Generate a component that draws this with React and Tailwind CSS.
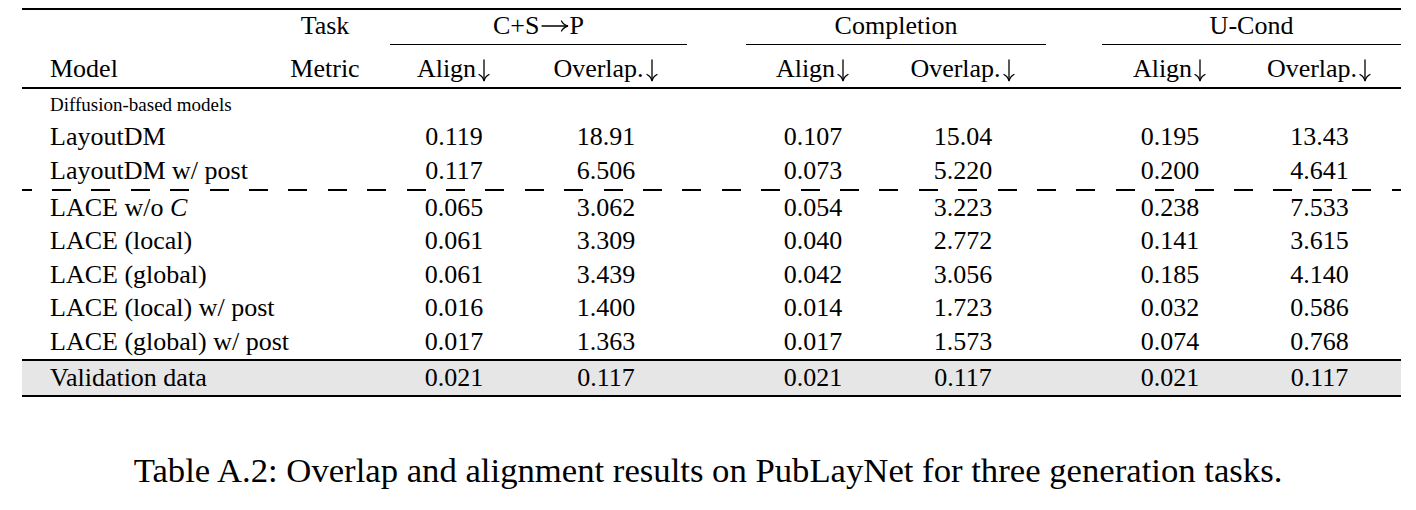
import React from "react";

const cols =
  "grid grid-cols-[238px_130px_128px_176px_52px_134px_166px_56px_136px_163px]";

const rows = [
  ["LayoutDM", ["0.119", "18.91", "0.107", "15.04", "0.195", "13.43"]],
  ["LayoutDM w/ post", ["0.117", "6.506", "0.073", "5.220", "0.200", "4.641"]],
];

const laceRows = [
  ["LACE w/o ", ["0.065", "3.062", "0.054", "3.223", "0.238", "7.533"], true],
  ["LACE (local)", ["0.061", "3.309", "0.040", "2.772", "0.141", "3.615"]],
  ["LACE (global)", ["0.061", "3.439", "0.042", "3.056", "0.185", "4.140"]],
  ["LACE (local) w/ post", ["0.016", "1.400", "0.014", "1.723", "0.032", "0.586"]],
  ["LACE (global) w/ post", ["0.017", "1.363", "0.017", "1.573", "0.074", "0.768"]],
];

function Values({ v }) {
  return (
    <>
      <div className="col-start-3 text-center">{v[0]}</div>
      <div className="col-start-4 text-center">{v[1]}</div>
      <div className="col-start-6 text-center">{v[2]}</div>
      <div className="col-start-7 text-center">{v[3]}</div>
      <div className="col-start-9 text-center">{v[4]}</div>
      <div className="col-start-10 text-center">{v[5]}</div>
    </>
  );
}

function Row({ name, v, cal, h }) {
  return (
    <div className={`${cols} ${h} items-center text-[26px] leading-[30px]`}>
      <div className="col-span-2 pl-[28px] whitespace-nowrap">
        {name}
        {cal && <span className="italic">C</span>}
      </div>
      <Values v={v} />
    </div>
  );
}

function DownArrow() {
  return (
    <svg
      width="14"
      height="23"
      viewBox="0 0 14 23"
      className="inline-block align-[-5px] ml-[1px]"
      fill="none"
      stroke="#000"
      strokeWidth="1.3"
      strokeLinecap="round"
    >
      <path d="M7 1 V21" />
      <path d="M2 15.5 C4.8 17 6.3 19 7 22 C7.7 19 9.2 17 12 15.5" />
    </svg>
  );
}

function RightArrow() {
  return (
    <svg
      width="28"
      height="14"
      viewBox="0 0 28 14"
      className="inline-block align-[1px] mx-[1px]"
      fill="none"
      stroke="#000"
      strokeWidth="1.3"
      strokeLinecap="round"
    >
      <path d="M1 7 H26" />
      <path d="M20.5 2 C22 4.8 24 6.3 27 7 C24 7.7 22 9.2 20.5 12" />
    </svg>
  );
}

function Head({ label }) {
  return (
    <span className="whitespace-nowrap">
      {label}
      <DownArrow />
    </span>
  );
}

export default function App() {
  return (
    <div className="w-[1416px] h-[510px] bg-white text-black font-['Liberation_Serif','Times_New_Roman',serif] pt-[8px]">
      <div className="ml-[22px] w-[1379px]">
        <div className="h-[2px] bg-black" />
        <div className={`${cols} h-[32px] items-center text-[26px] leading-[30px]`}>
          <div className="col-start-2 text-center">Task</div>
          <div className="col-start-3 col-span-2 mr-[7px] text-center whitespace-nowrap">
            C+S<RightArrow />P
          </div>
          <div className="col-start-6 col-span-2 text-center">Completion</div>
          <div className="col-start-9 col-span-2 text-center">U-Cond</div>
        </div>
        <div className={`${cols} mt-[1.5px] h-[1.5px]`}>
          <div className="col-start-3 col-span-2 mr-[7px] bg-black" />
          <div className="col-start-6 col-span-2 bg-black" />
          <div className="col-start-9 col-span-2 bg-black" />
        </div>
        <div className={`${cols} h-[41px] items-end text-[26px] leading-[34px]`}>
          <div className="pl-[28px]">Model</div>
          <div className="text-center">Metric</div>
          <div className="text-center"><Head label="Align" /></div>
          <div className="text-center"><Head label="Overlap." /></div>
          <div className="col-start-6 text-center"><Head label="Align" /></div>
          <div className="text-center"><Head label="Overlap." /></div>
          <div className="col-start-9 text-center"><Head label="Align" /></div>
          <div className="text-center"><Head label="Overlap." /></div>
        </div>
        <div className="mt-[1px] h-[2px] bg-black" />
        <div className="h-[31.6px] flex items-center pl-[28px] text-[19px]">
          Diffusion-based models
        </div>
        {rows.map(([n, v]) => (
          <Row key={n} name={n} v={v} h="h-[33.7px]" />
        ))}
        <div className="mt-[1.5px] h-[1.4px] bg-[repeating-linear-gradient(to_right,#000_0px,#000_9.6px,transparent_9.6px,transparent_30px,#000_30px,#000_39.4px)]" />
        {laceRows.map(([n, v, cal]) => (
          <Row key={n} name={n} v={v} cal={cal} h="h-[33.5px]" />
        ))}
        <div className="mt-[0.5px] h-[2px] bg-black" />
        <div className={`${cols} h-[34px] items-center bg-[#e6e6e6] text-[26px] leading-[30px]`}>
          <div className="col-span-2 pl-[28px] whitespace-nowrap">Validation data</div>
          <Values v={["0.021", "0.117", "0.021", "0.117", "0.021", "0.117"]} />
        </div>
        <div className="h-[2px] bg-black" />
      </div>
      <div className="mt-[54.6px] text-center text-[34.7px] leading-[40px] whitespace-nowrap">
        Table A.2: Overlap and alignment results on PubLayNet for three generation tasks.
      </div>
    </div>
  );
}
